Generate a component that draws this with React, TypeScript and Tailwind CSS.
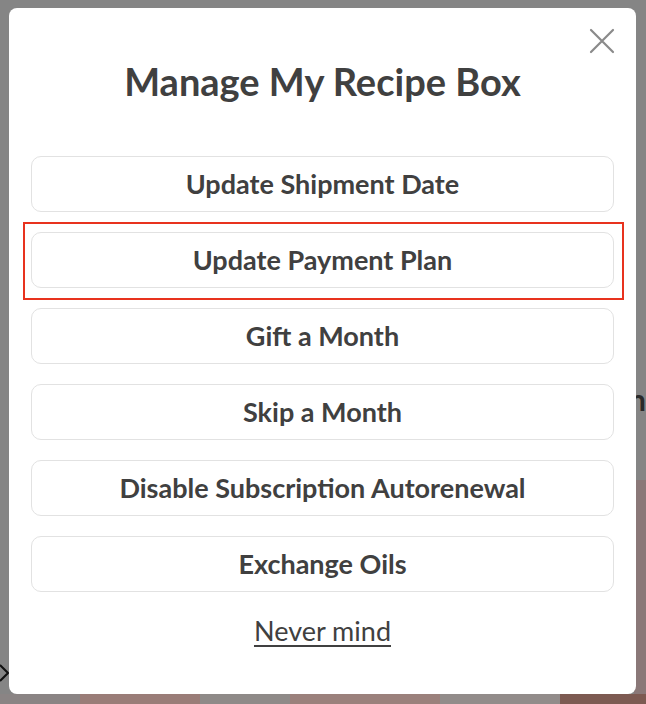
import React from "react";

const options = [
  "Update Shipment Date",
  "Update Payment Plan",
  "Gift a Month",
  "Skip a Month",
  "Disable Subscription Autorenewal",
  "Exchange Oils",
];

export default function App() {
  return (
    <div className="relative h-[704px] w-[646px] overflow-hidden bg-[#858585] font-['Lato',sans-serif]">
      {/* dimmed page behind the dialog */}
      <div className="flex h-full flex-col">
        <div className="flex h-[480px] justify-end pt-[384px]">
          <span className="text-[30px] font-bold leading-none text-[#2a2a2a]">n</span>
        </div>
        <div className="flex flex-1 justify-end">
          <div className="w-[12px] bg-[#8a7878]" />
        </div>
        <div className="flex h-[10px]">
          <div className="w-[80px] bg-[#8a8484]" />
          <div className="w-[120px] bg-[#9a7d78]" />
          <div className="w-[90px] bg-[#8f8a88]" />
          <div className="w-[150px] bg-[#9b817c]" />
          <div className="w-[120px] bg-[#928c8a]" />
          <div className="flex-1 bg-[#7d5a52]" />
        </div>
      </div>
      <svg className="absolute left-0 top-[664px]" width="9" height="18" viewBox="0 0 9 18" fill="none" stroke="#111" strokeWidth="2">
        <path d="M0 1 L8 9 L0 17" />
      </svg>

      <div className="absolute left-[9px] top-[8px] h-[686px] w-[627px] rounded-[8px] bg-white">
        <button className="absolute right-[15px] top-[14px] text-[#8a8a8a]" aria-label="Close">
          <svg width="38" height="38" viewBox="0 0 38 38" fill="none" stroke="currentColor" strokeWidth="2.2" strokeLinecap="round">
            <path d="M8 8 L30 30 M30 8 L8 30" />
          </svg>
        </button>
        <div className="flex flex-col items-center px-[22px] pt-[50px]">
          <h2 className="text-[38px] font-bold leading-[46px] text-[#404040]">Manage My Recipe Box</h2>
          <div className="mt-[52px] flex w-full flex-col gap-[20px]">
            {options.map((o) => (
              <button
                key={o}
                className="flex h-[56px] w-full items-center justify-center rounded-[10px] border border-[#e2e2e2] bg-white text-[27px] font-bold text-[#404040]"
              >
                {o}
              </button>
            ))}
          </div>
          <a className="mt-[22px] text-[27px] leading-[34px] text-[#404040] underline decoration-2 underline-offset-[4px]">
            Never mind
          </a>
        </div>
      </div>

      {/* highlight annotation */}
      <div className="pointer-events-none absolute left-[23px] top-[222px] h-[78px] w-[601px] border-2 border-[#e8321e]" />
    </div>
  );
}
